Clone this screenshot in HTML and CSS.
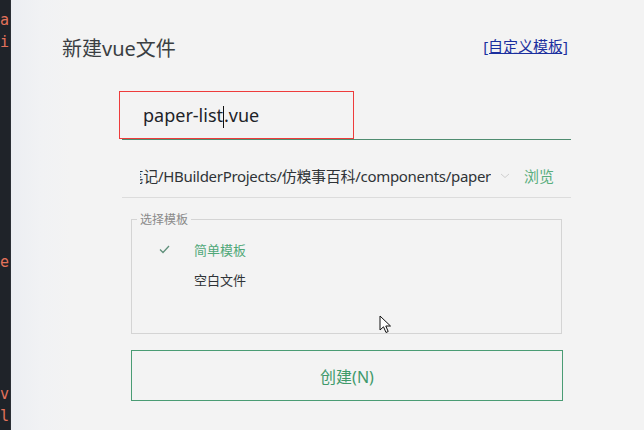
FILE: index.html
```html
<!DOCTYPE html>
<html lang="zh-CN">
<head>
    <meta charset="UTF-8">
    <meta name="viewport" content="width=device-width, initial-scale=1.0">
    <title>新建vue文件</title>
    <link rel="stylesheet" href="styles.css">
</head>
<body>
    <div class="code-strip">
        <div class="code-line">a</div>
        <div class="code-line">i</div>
        <div class="code-line"></div>
        <div class="code-line"></div>
        <div class="code-line"></div>
        <div class="code-line"></div>
        <div class="code-line"></div>
        <div class="code-line"></div>
        <div class="code-line"></div>
        <div class="code-line"></div>
        <div class="code-line"></div>
        <div class="code-line">e</div>
        <div class="code-line"></div>
        <div class="code-line"></div>
        <div class="code-line"></div>
        <div class="code-line"></div>
        <div class="code-line"></div>
        <div class="code-line">v</div>
        <div class="code-line">l</div>
    </div>

    <div class="dialog">
        <div class="dialog-header">
            <h1 class="dialog-title">新建vue文件</h1>
            <a class="custom-link" href="#">[自定义模板]</a>
        </div>

        <div class="form">
            <div class="name-field">
                <div class="name-box">paper-list<span class="caret"></span>.vue</div>
            </div>

            <div class="path-row">
                <div class="path-text"><span>D:/笔记/HBuilderProjects/仿糗事百科/components/paper</span></div>
                <svg class="chevron" width="10" height="6" viewBox="0 0 10 6">
                    <path d="M1 1 L5 4.5 L9 1" fill="none" stroke="#cfcfcf" stroke-width="1"/>
                </svg>
                <span class="browse">浏览</span>
            </div>

            <fieldset class="templates">
                <legend>选择模板</legend>
                <div class="template-item selected">
                    <svg class="check" width="11" height="9" viewBox="0 0 11 9">
                        <path d="M1 4.5 L4 7.5 L10 1" fill="none" stroke="#5f8f7a" stroke-width="1.3"/>
                    </svg>
                    <span>简单模板</span>
                </div>
                <div class="template-item">
                    <span class="check-space"></span>
                    <span>空白文件</span>
                </div>
            </fieldset>

            <button class="create-btn">创建(N)</button>
        </div>

        <svg class="mouse" width="14" height="20" viewBox="0 0 14 20">
            <path d="M1 1 L1 15 L4.5 11.8 L7 17.5 L9.2 16.5 L6.8 11 L11.5 11 Z" fill="#fff" stroke="#111" stroke-width="1" stroke-linejoin="round"/>
        </svg>
    </div>
</body>
</html>
```

FILE: styles.css
```css
* {
    box-sizing: border-box;
}
body {
    margin: 0;
    padding: 0;
    width: 644px;
    height: 430px;
    overflow: hidden;
    display: flex;
    font-family: "Noto Sans", "Noto Sans CJK SC", sans-serif;
    background-color: #f3f3f3;
}
.code-strip {
    width: 11px;
    flex-shrink: 0;
    background-color: #1f2329;
    border-right: 1px solid #2b2f35;
    padding-top: 9px;
    overflow: hidden;
    font-family: "DejaVu Sans Mono", monospace;
    font-size: 15px;
    color: #e2725b;
}
.code-line {
    height: 22px;
    line-height: 22px;
}
.dialog {
    position: relative;
    flex: 1;
    background: linear-gradient(to right, #eceef2 0, #f1f2f4 30px, #f3f3f3 60px);
}
.dialog-header {
    display: flex;
    justify-content: space-between;
    align-items: center;
    padding: 35px 76px 0 51px;
}
.dialog-title {
    margin: 0;
    font-size: 20px;
    font-weight: normal;
    line-height: 28px;
    color: #3a3e42;
}
.custom-link {
    font-size: 15px;
    line-height: 20px;
    color: #1b2f9e;
    text-decoration: underline;
    margin-top: -6px;
}
.form {
    margin: 28px 0 0 108px;
    width: 452px;
}
.name-field {
    margin-left: 3px;
    border-bottom: 1px solid #4f8c70;
}
.name-box {
    margin-left: -3px;
    width: 235px;
    height: 48px;
    border: 1px solid #ee3b3b;
    padding-left: 23px;
    font-size: 18px;
    line-height: 46px;
    color: #1e2328;
}
.caret {
    display: inline-block;
    width: 1px;
    height: 22px;
    vertical-align: middle;
    background-color: #111;
}
.path-row {
    display: flex;
    align-items: center;
    height: 58px;
    padding-top: 14px;
    margin-left: 3px;
    border-bottom: 1px solid #dcdcdc;
}
.path-text {
    display: flex;
    justify-content: flex-end;
    width: 351px;
    margin-left: 18px;
    overflow: hidden;
    white-space: nowrap;
    font-size: 15px;
    letter-spacing: -0.3px;
    color: #2f3337;
}
.path-text span {
    flex-shrink: 0;
}
.chevron {
    margin-left: 9px;
}
.browse {
    margin-left: 14px;
    font-size: 15px;
    color: #5aae7e;
}
.templates {
    margin: 12px 9px 0 12px;
    padding: 6px 0 34px 0;
    height: 124px;
    border: 1px solid #d4d4d4;
}
.templates legend {
    margin-left: 5px;
    padding: 0 3px;
    font-size: 12px;
    color: #8a8a8a;
}
.template-item {
    display: flex;
    align-items: center;
    height: 30px;
    font-size: 13px;
    color: #2f3337;
}
.template-item.selected {
    color: #4fa878;
}
.check,
.check-space {
    width: 11px;
    margin-left: 27px;
    margin-right: 24px;
}
.create-btn {
    display: block;
    margin: 16px 0 0 12px;
    width: 432px;
    height: 51px;
    border: 1px solid #4a9c74;
    background-color: #f3f3f3;
    font-family: "Noto Sans", "Noto Sans CJK SC", sans-serif;
    font-size: 16px;
    color: #3f9a6b;
}
.mouse {
    position: absolute;
    left: 368px;
    top: 315px;
}
```
